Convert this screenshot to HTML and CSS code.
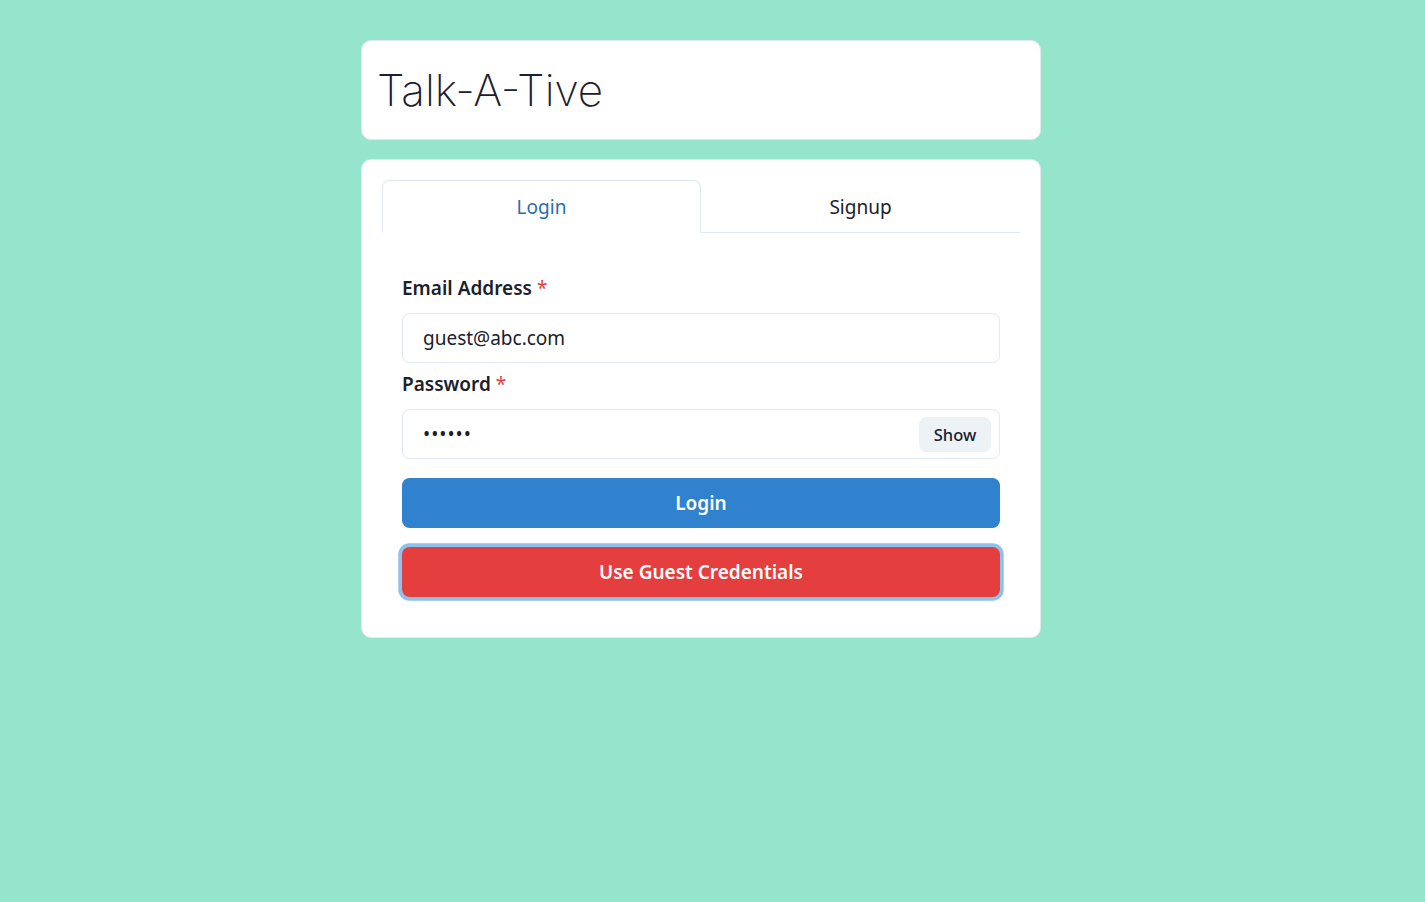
FILE: index.html
```html
<!DOCTYPE html>
<html lang="en">
<head>
<meta charset="utf-8">
<title>Talk-A-Tive</title>
<link rel="stylesheet" href="styles.css">
</head>
<body>
<div class="container">
  <div class="header-box">
    <div class="title">Talk-A-Tive</div>
  </div>
  <div class="main-box">
    <div class="tab-list">
      <div class="tab selected">Login</div>
      <div class="tab">Signup</div>
    </div>
    <form class="form">
      <div class="field">
        <label class="label">Email Address<span class="req">*</span></label>
        <input class="input" type="email" value="guest@abc.com">
      </div>
      <div class="field">
        <label class="label">Password<span class="req">*</span></label>
        <div class="input-group">
          <input class="input input-pw" type="password" value="123456">
          <div class="right-element"><button type="button" class="show-btn">Show</button></div>
        </div>
      </div>
      <button type="button" class="btn btn-blue">Login</button>
      <button type="button" class="btn btn-red">Use Guest Credentials</button>
    </form>
  </div>
</div>
</body>
</html>
```

FILE: styles.css
```css
html, body {
  margin: 0;
  padding: 0;
}
body {
  background: #94e5cb;
  font-family: "Noto Sans", "Open Sans", sans-serif;
  color: #1a202c;
  min-height: 902px;
}
.container {
  width: 680px;
  margin-left: 361px;
  padding-top: 40px;
}
.header-box {
  background: #fff;
  border: 1px solid #e2e8f0;
  border-radius: 10px;
  padding: 15px;
  margin-bottom: 19px;
}
.title {
  font-family: "Inter", "Lato", sans-serif;
  font-weight: 200;
  font-size: 44px;
  line-height: 68px;
}
.main-box {
  background: #fff;
  border: 1px solid #e2e8f0;
  border-radius: 10px;
  padding: 20px;
}
.tab-list {
  display: flex;
  border-bottom: 1px solid #e2e8f0;
  margin-bottom: 20px;
}
.tab {
  flex: 1;
  text-align: center;
  font-size: 19px;
  line-height: 30px;
  padding: 11px 20px 10px;
  border: 1px solid transparent;
  border-top-left-radius: 7.5px;
  border-top-right-radius: 7.5px;
  margin-bottom: -1px;
  color: #1a202c;
}
.tab.selected {
  color: #2b6cb0;
  border-color: #e2e8f0;
  border-bottom-color: #fff;
}
.form {
  margin: 0;
  padding: 20px 20px 20px;
  display: flex;
  flex-direction: column;
}
.field + .field {
  margin-top: 6.25px;
}
.label {
  display: block;
  font-size: 19px;
  font-weight: 600;
  line-height: 30px;
  margin-bottom: 10px;
}
.req {
  color: #e53e3e;
  font-weight: 400;
  margin-left: 5px;
}
.input {
  display: block;
  box-sizing: border-box;
  width: 100%;
  height: 50px;
  border: 1px solid #e2e8f0;
  border-radius: 7.5px;
  padding: 0 20px;
  font-family: inherit;
  font-size: 19px;
  color: #1a202c;
  background: #fff;
  outline: none;
}
.input-group {
  position: relative;
}
.input-pw {
  padding-right: 90px;
  letter-spacing: 1px;
}
.right-element {
  position: absolute;
  top: 0;
  right: 0;
  width: 90px;
  height: 50px;
  display: flex;
  align-items: center;
  justify-content: center;
}
.show-btn {
  height: 35px;
  padding: 0 15px;
  border: none;
  border-radius: 7.5px;
  background: #edf2f7;
  font-family: inherit;
  font-size: 16.5px;
  font-weight: 500;
  color: #1a202c;
}
.btn {
  height: 50px;
  margin-top: 18.75px;
  border: none;
  border-radius: 7.5px;
  font-family: inherit;
  font-size: 19px;
  font-weight: 600;
  color: #fff;
  width: 100%;
}
.btn-blue {
  background: #3182ce;
}
.btn-red {
  background: #e53e3e;
  box-shadow: 0 0 0 3.75px rgba(66, 153, 225, 0.6);
}
```
